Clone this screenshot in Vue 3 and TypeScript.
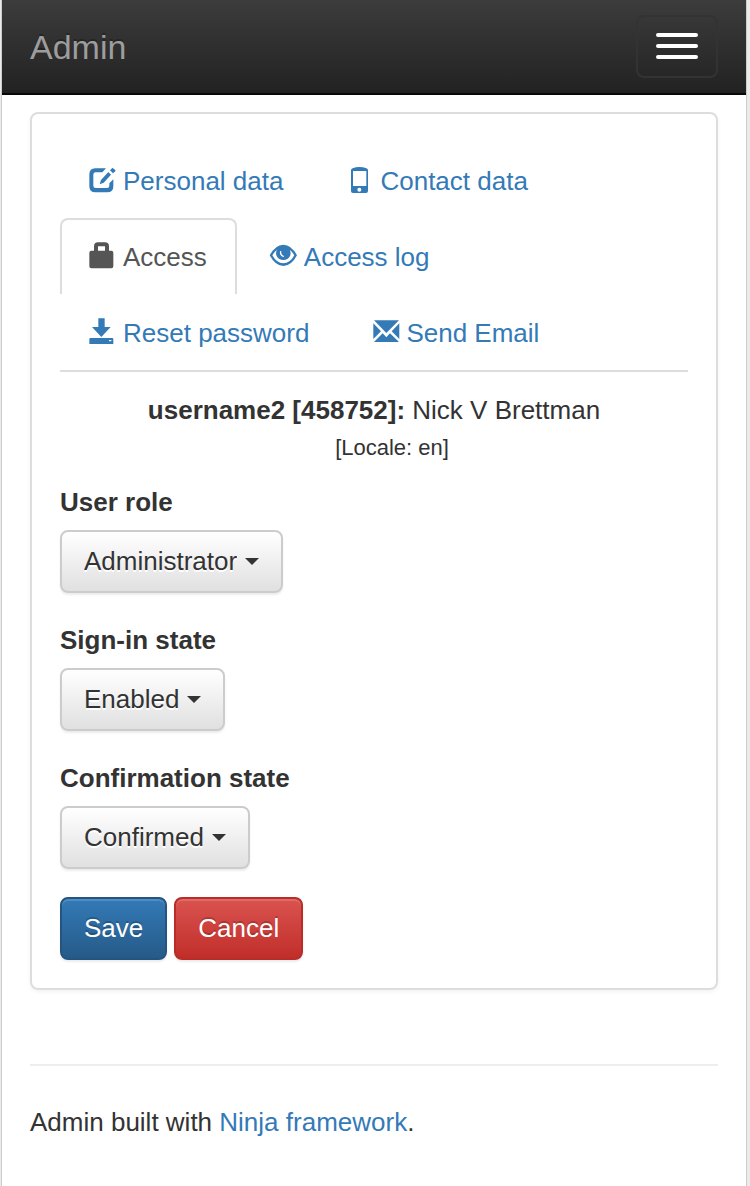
<script setup lang="ts">
import { reactive, ref } from 'vue'

type IconName = 'edit' | 'phone' | 'lock' | 'eye' | 'save' | 'envelope'

interface Tab {
  label: string
  icon: IconName
}

interface Field {
  id: string
  label: string
  value: string
  options: string[]
}

const tabs: Tab[] = [
  { label: 'Personal data', icon: 'edit' },
  { label: 'Contact data', icon: 'phone' },
  { label: 'Access', icon: 'lock' },
  { label: 'Access log', icon: 'eye' },
  { label: 'Reset password', icon: 'save' },
  { label: 'Send Email', icon: 'envelope' },
]

const activeTab = ref('Access')

const fields = reactive<Field[]>([
  { id: 'role', label: 'User role', value: 'Administrator', options: ['Administrator', 'User'] },
  { id: 'signin', label: 'Sign-in state', value: 'Enabled', options: ['Enabled', 'Disabled'] },
  { id: 'confirmation', label: 'Confirmation state', value: 'Confirmed', options: ['Confirmed', 'Unconfirmed'] },
])

const viewBoxes: Record<IconName, string> = {
  edit: '120 53 78 78',
  phone: '291 51 78 78',
  lock: '120 281 78 78',
  eye: '64 281 78 78',
  save: '120 59 78 78',
  envelope: '101 59 78 78',
}
</script>

<template>
  <div class="page">
    <header class="navbar">
      <a class="brand" href="#">Admin</a>
      <button class="toggle" type="button" aria-label="Toggle navigation">
        <span class="bar"></span>
        <span class="bar"></span>
        <span class="bar"></span>
      </button>
    </header>

    <main class="content">
      <section class="panel">
        <nav class="tabs">
          <a
            v-for="tab in tabs"
            :key="tab.label"
            href="#"
            class="tab"
            :class="{ active: tab.label === activeTab }"
            @click.prevent="activeTab = tab.label"
          >
            <svg class="icon" :viewBox="viewBoxes[tab.icon]" aria-hidden="true">
              <template v-if="tab.icon === 'edit'">
                <path d="M136 54H168L157 66H137Q130 66 130 73V106Q130 113 137 113H171Q178 113 178 106V99L190 87V108Q190 126 172 126H136Q118 126 118 108V72Q118 54 136 54Z" />
                <path d="M149 102L153 89L175 65L183 73L161 97Z" />
                <path d="M180 60L186 54Q188 52 191 55L195 58Q198 61 196 63L189 69Z" />
              </template>
              <template v-else-if="tab.icon === 'phone'">
                <path fill-rule="evenodd" d="M303 58Q303 54 308 52Q317 48 328 48Q340 48 349 52Q354 54 354 58V120Q354 126 348 126H309Q303 126 303 120ZM309 60V105H349V60ZM328 110A6 6 0 1 0 328 122A6 6 0 1 0 328 110Z" />
              </template>
              <template v-else-if="tab.icon === 'lock'">
                <path fill-rule="evenodd" d="M132 301V288Q132 276 144 276H165Q177 276 177 288V301H184Q190 301 190 307V348Q190 354 184 354H124Q118 354 118 348V307Q118 301 124 301ZM144 301H165V288H144Z" />
              </template>
              <template v-else-if="tab.icon === 'eye'">
                <path d="M60 315Q77 283 101 283Q125 283 142 315Q125 347 101 347Q77 347 60 315Z" />
                <path class="cutout" d="M68 315Q74 304 82 298Q77 308 81 317Q87 329 101 329Q115 329 121 317Q125 308 120 298Q128 304 134 315Q121 339 101 339Q81 339 68 315Z" />
                <path class="highlight" d="M93 304Q91 314 101 318" />
              </template>
              <template v-else-if="tab.icon === 'save'">
                <path d="M145 54H164V80H182L154 110L126 80H145Z" />
                <path fill-rule="evenodd" d="M120 113H188L190 116V131H118V116ZM177 119V123H184V119Z" />
              </template>
              <template v-else>
                <path d="M104 60H179L141 98Z" />
                <path d="M102 69L125 93L102 116Z" />
                <path d="M180 69V116L157 93Z" />
                <path d="M104 125L130 99L141 111L152 99L179 125Z" />
              </template>
            </svg>
            <span>{{ tab.label }}</span>
          </a>
        </nav>

        <div class="user">
          <div><strong>username2 [458752]:</strong> Nick V Brettman</div>
          <div class="locale">[Locale: en]</div>
        </div>

        <form class="form" @submit.prevent>
          <div v-for="field in fields" :key="field.id" class="group">
            <label :for="field.id">{{ field.label }}</label>
            <div class="dropdown">
              <select :id="field.id" v-model="field.value" class="btn btn-default">
                <option v-for="option in field.options" :key="option">{{ option }}</option>
              </select>
              <svg class="caret" viewBox="0 0 14 7" aria-hidden="true"><path d="M0 0H14L7 7Z" /></svg>
            </div>
          </div>
          <div class="actions">
            <button class="btn btn-primary" type="submit">Save</button>
            <button class="btn btn-danger" type="button">Cancel</button>
          </div>
        </form>
      </section>
    </main>

    <footer class="footer">
      Admin built with <a href="#">Ninja framework</a>.
    </footer>
  </div>
</template>

<style>
body {
  margin: 0;
  background: #ebebeb;
}
</style>

<style scoped>
.page {
  box-sizing: border-box;
  min-height: 100vh;
  margin: 0 3px 0 1px;
  border: solid #ccc;
  border-width: 0 1px;
  background: #fff;
  color: #333;
  font: 26px/38px "Liberation Sans", Arial, sans-serif;
}

a {
  color: #337ab7;
  text-decoration: none;
}

.navbar {
  display: flex;
  align-items: center;
  justify-content: space-between;
  padding: 15px 28px;
  border-bottom: 2px solid #080808;
  background: linear-gradient(#3c3c3c, #222);
}

.brand {
  color: #9d9d9d;
  font-size: 34px;
  text-shadow: 0 -2px 0 rgba(0, 0, 0, 0.25);
}

.toggle {
  display: flex;
  flex-direction: column;
  gap: 7px;
  padding: 16px 18px 17px;
  border: 2px solid #333;
  border-radius: 8px;
  background: transparent;
}

.bar {
  width: 42px;
  height: 4px;
  border-radius: 2px;
  background: #fff;
}

.content {
  padding: 17px 28px 0;
}

.panel {
  padding: 28px;
  border: 2px solid #ddd;
  border-radius: 8px;
  box-shadow: 0 2px 4px rgba(0, 0, 0, 0.05);
}

.tabs {
  display: flex;
  flex-wrap: wrap;
  column-gap: 4px;
  border-bottom: 2px solid #ddd;
}

.tab {
  display: flex;
  align-items: center;
  gap: 7px;
  padding: 18px 28px;
  border: 2px solid transparent;
  border-bottom: 0;
  border-radius: 8px 8px 0 0;
}

.tab.active {
  border-color: #ddd;
  color: #555;
}

.icon {
  width: 26px;
  height: 26px;
  overflow: visible;
  fill: currentColor;
}

.cutout {
  fill: #fff;
}

.highlight {
  fill: none;
  stroke: #fff;
  stroke-width: 4;
  stroke-linecap: round;
}

.user {
  padding: 19px 0 16px;
  text-align: center;
}

.locale {
  padding-left: 36px;
  font-size: 22px;
}

.form {
  display: flex;
  flex-direction: column;
  gap: 28px;
}

.group {
  display: flex;
  flex-direction: column;
  align-items: flex-start;
  gap: 9px;
}

label {
  font-weight: bold;
}

.dropdown {
  display: grid;
  align-items: center;
  justify-items: end;
}

.dropdown > * {
  grid-area: 1 / 1;
}

.caret {
  width: 14px;
  height: 7px;
  margin-right: 24px;
  fill: #333;
  pointer-events: none;
}

.btn {
  box-sizing: border-box;
  margin: 0;
  padding: 12px 22px;
  border: 2px solid;
  border-radius: 8px;
  font: 26px/35px "Liberation Sans", Arial, sans-serif;
  box-shadow: inset 0 2px 0 rgba(255, 255, 255, 0.15), 0 2px 2px rgba(0, 0, 0, 0.075);
}

.btn-default {
  appearance: none;
  field-sizing: content;
  padding-right: 44px;
  border-color: #ccc;
  background: linear-gradient(#fff, #e0e0e0);
  color: #333;
  text-shadow: 0 2px 0 #fff;
}

.btn-primary {
  border-color: #245580;
  background: linear-gradient(#337ab7, #265a88);
  color: #fff;
  text-shadow: 0 -2px 0 rgba(0, 0, 0, 0.2);
}

.btn-danger {
  border-color: #b92c28;
  background: linear-gradient(#d9534f, #c12e2a);
  color: #fff;
  text-shadow: 0 -2px 0 rgba(0, 0, 0, 0.2);
}

.actions {
  display: flex;
  gap: 7px;
}

.footer {
  margin: 74px 28px 0;
  padding: 37px 0;
  border-top: 2px solid #eee;
}
</style>
